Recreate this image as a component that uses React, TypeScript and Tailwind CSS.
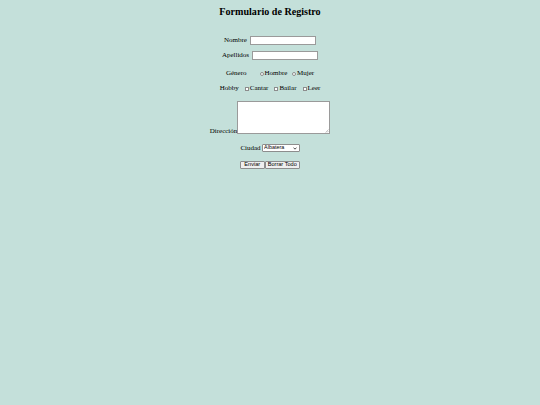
import { FC } from 'react';

const Radio: FC<{ name: string }> = ({ name }) => (
    <input type="radio" name={name} className="appearance-none w-[4px] h-[4px] rounded-full border border-[#8d8d8d] bg-white" />
);

const Check: FC = () => (
    <input type="checkbox" className="appearance-none w-[4px] h-[4px] rounded-none border border-[#8d8d8d] bg-white" />
);

const App: FC = () => (
    <div className="min-h-screen bg-[#c4e0da] text-black font-['Liberation_Serif',serif] text-[7px]">
        <h2 className="pt-[6px] text-center text-[10.1px] leading-[12px] font-bold">Formulario de Registro</h2>
        <form className="flex flex-col items-center">
            <div className="mt-[18px] h-[9px] flex items-center gap-[3px]">
                <label>Nombre</label>
                <input type="text" className="w-[66px] h-[9px] border border-[#9a9a9a] bg-white" />
            </div>
            <div className="mt-[6px] h-[9px] flex items-center gap-[3px]">
                <label>Apellidos</label>
                <input type="text" className="w-[66px] h-[9px] border border-[#9a9a9a] bg-white" />
            </div>
            <div className="mt-[9px] h-[9px] flex items-center">
                <label className="mr-[13px]">Género</label>
                <Radio name="genero" />
                <span className="ml-[1px] mr-[4.5px]">Hombre</span>
                <Radio name="genero" />
                <span className="ml-[1px]">Mujer</span>
            </div>
            <div className="mt-[6px] h-[9px] flex items-center">
                <label className="mr-[6px]">Hobby</label>
                <Check />
                <span className="ml-[1px] mr-[6px]">Cantar</span>
                <Check />
                <span className="ml-[1px] mr-[6px]">Bailar</span>
                <Check />
                <span className="ml-[1px]">Leer</span>
            </div>
            <div className="mt-[8px] flex items-end">
                <label className="leading-[6px]">Dirección</label>
                <div className="relative">
                    <textarea className="block w-[93px] h-[33px] resize-none border border-[#9a9a9a] bg-white" />
                    <svg className="absolute right-[1px] bottom-[1px]" width="4" height="4" viewBox="0 0 4 4">
                        <path d="M0.5 3.5 L3.5 0.5 M2 3.5 L3.5 2" stroke="#a0a0a0" strokeWidth="0.6" />
                    </svg>
                </div>
            </div>
            <div className="mt-[10px] h-[8px] flex items-center gap-[1px]">
                <label>Ciudad</label>
                <div className="relative">
                    <select className="appearance-none block w-[38px] h-[7.5px] pl-[1.5px] border border-[#8d8d8d] rounded-[1px] bg-white font-['Liberation_Sans',sans-serif] text-[5.4px] leading-[5.5px]">
                        <option>Albatera</option>
                    </select>
                    <svg className="absolute right-[2.5px] top-[2.5px]" width="4" height="3" viewBox="0 0 4 3">
                        <path d="M0.5 0.6 L2 2.2 L3.5 0.6" fill="none" stroke="#222" strokeWidth="0.8" />
                    </svg>
                </div>
            </div>
            <div className="mt-[9px] flex font-['Liberation_Sans',sans-serif] text-[5.6px]">
                <button type="submit" className="w-[24.5px] h-[7.5px] leading-[5.5px] border border-[#8d8d8d] rounded-[1px] bg-[#efefef]">Enviar</button>
                <button type="reset" className="w-[35.5px] h-[7.5px] leading-[5.5px] border border-[#8d8d8d] rounded-[1px] bg-[#efefef]">Borrar Todo</button>
            </div>
        </form>
    </div>
);

export default App;
